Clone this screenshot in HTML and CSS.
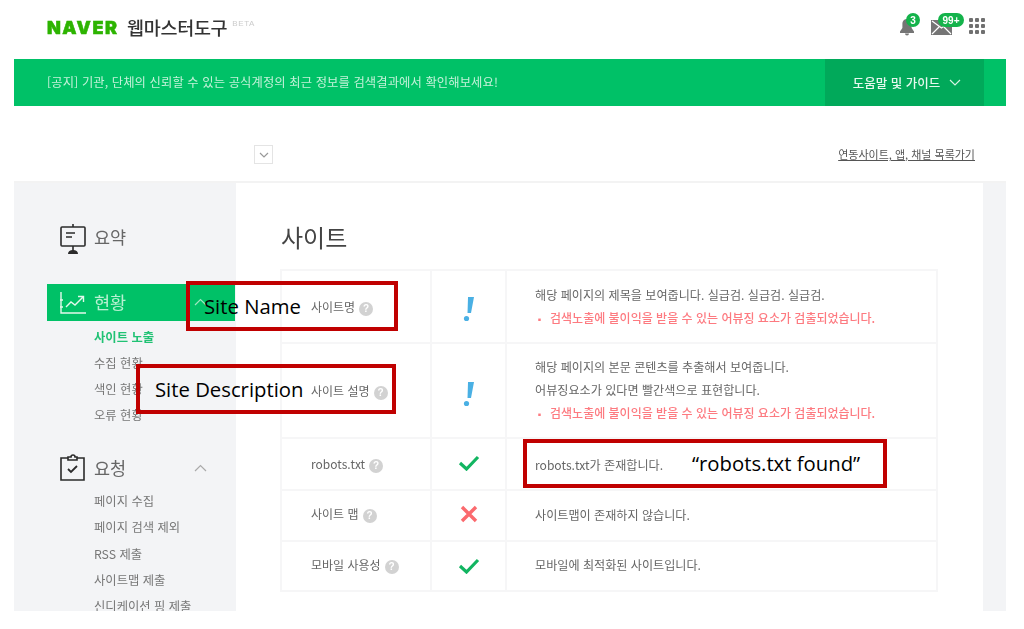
FILE: index.html
```html
<!DOCTYPE html>
<html lang="ko">
<head>
<meta charset="utf-8">
<title>네이버 웹마스터도구</title>
<link rel="stylesheet" href="styles.css">
</head>
<body>
<div class="page">
  <div class="shot">
    <header class="top">
      <div class="logo"><span class="naver">NAVER</span><span class="tool">웹마스터도구</span><span class="beta">BETA</span></div>
      <div class="tools">
        <span class="ico bell">
          <svg width="18" height="18" viewBox="0 0 18 18"><path d="M9 1c-3 0-4.600 2.300-4.600 5v4L2 13.600V15h14v-1.400L13.600 10V6c0-2.700-1.600-5-4.600-5zM7 15.500a2 2 0 0 0 4 0z" fill="#757575"/></svg>
          <b class="badge round">3</b>
        </span>
        <span class="ico mail">
          <svg width="21" height="15" viewBox="0 0 21 15"><rect width="21" height="15" fill="#757575"/><path d="M1 1l9.500 7L20 1M1 14l7-7M20 14l-7-7" fill="none" stroke="#fff" stroke-width="1.200"/></svg>
          <b class="badge pill">99+</b>
        </span>
        <span class="dots"><i></i><i></i><i></i><i></i><i></i><i></i><i></i><i></i><i></i></span>
      </div>
    </header>

    <section class="notice">
      <p class="notice-text">[공지] 기관, 단체의 신뢰할 수 있는 공식계정의 최근 정보를 검색결과에서 확인해보세요!</p>
      <div class="guide">도움말 및 가이드
        <svg width="12" height="7" viewBox="0 0 12 7"><path d="M1 1l5 5 5-5" fill="none" stroke="#d5f3e3" stroke-width="1.200"/></svg>
      </div>
    </section>

    <div class="bar">
      <span class="select"><svg width="10" height="6" viewBox="0 0 10 6"><path d="M1 1l4 4 4-4" fill="none" stroke="#999" stroke-width="1.200"/></svg></span>
      <a class="back">연동사이트, 앱, 채널 목록가기</a>
    </div>

    <main class="main">
      <nav class="side">
        <div class="menu first">
          <svg class="mi" width="28" height="32" viewBox="0 0 28 32"><g fill="none" stroke="#2b2b2b" stroke-width="1.600"><rect x="2" y="4" width="24" height="19" rx="1"/><path d="M14 1v3M14 23v5"/><path d="M7 10h9M7 14h6"/></g><path d="M9 31c0-2.500 2-4 5-4s5 1.500 5 4z" fill="#2b2b2b"/></svg>
          <span class="mt">요약</span>
        </div>
        <div class="menu on">
          <svg class="mi" width="28" height="24" viewBox="0 0 28 24"><g fill="none" stroke="#e3f8ec" stroke-width="1.400"><path d="M2 1v21h25"/><path d="M1 9h3M1 16h3"/><path d="M7 16l5-5 4 3 8-8M19 5.500h5.500V11"/></g></svg>
          <span class="mt">현황</span>
          <svg class="chev" width="13" height="8" viewBox="0 0 13 8"><path d="M1 7l5.500-5.500L12 7" fill="none" stroke="#9fe6c1" stroke-width="1.200"/></svg>
        </div>
        <ul class="sub">
          <li class="cur">사이트 노출</li>
          <li>수집 현황</li>
          <li>색인 현황</li>
          <li>오류 현황</li>
        </ul>
        <div class="menu second">
          <svg class="mi" width="28" height="28" viewBox="0 0 28 28"><g fill="none" stroke="#2b2b2b" stroke-width="1.600"><path d="M9 4H2v22h23V4h-7"/><path d="M9 6V3h3a2 2 0 0 1 4 0h2v3z"/></g><path d="M9 15l3 3 6-6" fill="none" stroke="#2b2b2b" stroke-width="1.800"/></svg>
          <span class="mt">요청</span>
          <svg class="chev" width="13" height="8" viewBox="0 0 13 8"><path d="M1 7l5.500-5.500L12 7" fill="none" stroke="#aaa" stroke-width="1.200"/></svg>
        </div>
        <ul class="sub sub-last">
          <li>페이지 수집</li>
          <li>페이지 검색 제외</li>
          <li>RSS 제출</li>
          <li>사이트맵 제출</li>
          <li>신디케이션 핑 제출</li>
        </ul>
      </nav>

      <article class="content">
        <h1 class="title">사이트</h1>
        <table class="report">
          <tr class="r1">
            <th>사이트명<i class="help">?</i></th>
            <td class="st"><svg width="12" height="26" viewBox="0 0 12 26"><path d="M5 1h6L8 17H4.500z" fill="#4ab0e4"/><circle cx="3.500" cy="22.500" r="2.600" fill="#4ab0e4"/></svg></td>
            <td class="ds"><p>해당 페이지의 제목을 보여줍니다. 실급검. 실급검. 실급검.</p><p class="warn">검색노출에 불이익을 받을 수 있는 어뷰징 요소가 검출되었습니다.</p></td>
          </tr>
          <tr class="r2">
            <th>사이트 설명<i class="help">?</i></th>
            <td class="st"><svg width="12" height="26" viewBox="0 0 12 26"><path d="M5 1h6L8 17H4.500z" fill="#4ab0e4"/><circle cx="3.500" cy="22.500" r="2.600" fill="#4ab0e4"/></svg></td>
            <td class="ds"><p>해당 페이지의 본문 콘텐츠를 추출해서 보여줍니다.</p><p>어뷰징요소가 있다면 빨간색으로 표현합니다.</p><p class="warn">검색노출에 불이익을 받을 수 있는 어뷰징 요소가 검출되었습니다.</p></td>
          </tr>
          <tr class="r3">
            <th>robots.txt<i class="help">?</i></th>
            <td class="st"><svg width="22" height="16" viewBox="0 0 22 16"><path d="M2 8l6.500 6L20 2" fill="none" stroke="#12b561" stroke-width="3.200"/></svg></td>
            <td class="ds"><p>robots.txt가 존재합니다.</p></td>
          </tr>
          <tr class="r4">
            <th>사이트 맵<i class="help">?</i></th>
            <td class="st"><svg width="18" height="18" viewBox="0 0 18 18"><path d="M2 2l14 14M16 2L2 16" fill="none" stroke="#fb6a6e" stroke-width="3.400"/></svg></td>
            <td class="ds"><p>사이트맵이 존재하지 않습니다.</p></td>
          </tr>
          <tr class="r5">
            <th>모바일 사용성<i class="help">?</i></th>
            <td class="st"><svg width="22" height="16" viewBox="0 0 22 16"><path d="M2 8l6.500 6L20 2" fill="none" stroke="#12b561" stroke-width="3.200"/></svg></td>
            <td class="ds"><p>모바일에 최적화된 사이트입니다.</p></td>
          </tr>
        </table>
      </article>
      <div class="strip"></div>
    </main>
  </div>

  <div class="note note-name">Site Name</div>
  <div class="note note-desc">Site Description</div>
  <div class="note note-robots">“robots.txt found”</div>
</div>
</body>
</html>
```

FILE: styles.css
```css
* { box-sizing: border-box; }
html, body { margin: 0; padding: 0; background: #fff; }
body { font-family: "Noto Sans CJK KR", "Noto Sans", sans-serif; color: #666; }
.page { position: relative; width: 1024px; height: 629px; overflow: hidden; }
.shot { width: 1024px; height: 629px; filter: blur(0.7px); }
p, ul, h1 { margin: 0; padding: 0; }
ul { list-style: none; }

.top { height: 59px; display: flex; justify-content: space-between; padding: 13px 39px 0 47px; }
.logo { display: flex; align-items: center; height: 28px; }
.naver { font-family: Inter, sans-serif; font-weight: 900; font-size: 18px; color: #2db400; letter-spacing: 1.5px; width: 80px; white-space: nowrap; -webkit-text-stroke: 0.5px #2db400; }
.tool { font-size: 18.500px; line-height: 28px; font-weight: 500; color: #333; letter-spacing: -0.3px; }
.beta { font-family: "Liberation Sans", sans-serif; font-size: 8px; color: #ccc; letter-spacing: 0.6px; margin: -8px 0 0 5px; }
.tools { display: flex; align-items: flex-start; }
.ico { position: relative; display: block; }
.ico svg { display: block; }
.bell { width: 18px; height: 18px; margin: 5px 15px 0 0; }
.mail { width: 21px; height: 15px; margin: 7px 17px 0 0; }
.badge { position: absolute; display: flex; align-items: center; justify-content: center; background: #14b34b; color: #fff; font-family: "Liberation Sans", sans-serif; font-size: 10px; font-weight: 700; }
.round { width: 14px; height: 14px; border-radius: 50%; top: -5px; left: 8px; }
.pill { width: 26px; height: 14px; border-radius: 7px; top: -7px; left: 7px; }
.dots { display: grid; grid-template-columns: repeat(3, 4px); gap: 2px; margin-top: 5px; }
.dots i { width: 4px; height: 4px; background: #707070; border-radius: 1px; }

.notice { height: 47px; margin: 0 18px 0 14px; background: #00c167; display: flex; justify-content: space-between; padding: 0 22px 0 33px; align-items: stretch; }
.notice-text { font-size: 12.300px; line-height: 47px; color: #c4f1d9; letter-spacing: 0.1px; }
.guide { width: 159px; background: #01a95a; color: #e6f8ee; font-size: 12.500px; font-weight: 500; display: flex; align-items: center; justify-content: center; gap: 9px; padding: 0 0 1px 5px; }

.bar { height: 75px; margin: 0 49px 0 254px; display: flex; justify-content: space-between; align-items: flex-start; padding-top: 39px; }
.select { width: 19px; height: 19px; border: 1px solid #e4e4e4; display: flex; align-items: center; justify-content: center; }
.back { font-size: 11px; line-height: 16px; margin-top: 1px; color: #555; text-decoration: underline; }

.main { height: 430px; margin: 0 18px 0 14px; display: flex; overflow: hidden; border-top: 2px solid #f3f3f3; }
.side { width: 222px; flex: none; background: #f3f4f6; padding: 37px 1px 0 33px; }
.menu { display: flex; align-items: center; position: relative; height: 37px; font-size: 17.500px; }
.mi { flex: none; margin-left: 12px; }
.mt { position: absolute; left: 47px; top: 4px; line-height: 26px; color: #666; }
.chev { position: absolute; left: 147px; top: 14px; }
.on { background: #00c167; margin-top: 27px; }
.on .mt { color: #b8f0d2; top: 5px; }
.second { margin-top: 26px; height: 28px; }
.second .mt { top: 1px; }
.second .chev { top: 10px; }
.sub { padding: 3px 0 0 47px; font-size: 12.300px; line-height: 26px; color: #777; white-space: nowrap; }
.sub-last { padding-top: 6px; line-height: 26.300px; }
.cur { color: #20c274; font-weight: 700; }

.content { flex: 1; padding: 0 44px 0 44px; min-width: 0; }
.title { font-size: 24px; line-height: 36px; font-weight: 400; color: #444; margin: 36px 0 14px 1px; }
.report { width: 658px; border-collapse: collapse; table-layout: fixed; }
.report th, .report td { border: 2px solid #f6f6f7; padding: 0; }
.report th { width: 150px; text-align: left; padding-left: 29px; font-size: 12px; font-weight: 400; color: #666; white-space: nowrap; }
.report .st { width: 75px; line-height: 0; }
.st svg { display: block; margin: 0 auto; }
.ds { padding-left: 28px !important; font-size: 12.100px; line-height: 23px; color: #666; }
.warn { color: #fd7a80; font-weight: 500; font-size: 12px; }
.warn::before { content: "▪"; margin-right: 6px; font-size: 9px; }
.help { display: inline-block; width: 14px; height: 14px; margin-left: 4px; border-radius: 50%; background: #d2d2d2; color: #fff; font-family: "Liberation Sans", sans-serif; font-size: 10px; font-weight: 700; font-style: normal; line-height: 14px; text-align: center; vertical-align: 0; }
.r1 { height: 73px; } .r2 { height: 95px; } .r3 { height: 52px; } .r4 { height: 51px; } .r5 { height: 50px; }
.report .r1 .st { padding-top: 5px; }
.report .r2 .st { padding-top: 7px; }
.report .r3 .st { padding-bottom: 3px; }
.report .r4 .st { padding-bottom: 4px; }
.report .r5 .st { padding-bottom: 1px; }
.report .r1 th { padding-top: 1px; }
.report .r4 th, .report .r4 .ds { padding-bottom: 3px; }
.report .r5 th, .report .r5 .ds { padding-bottom: 3px; }

.strip { width: 23px; flex: none; background: #f3f4f6; }

.note { position: absolute; border: 4px solid #c00000; color: #000; font-family: "Open Sans", sans-serif; font-size: 20.300px; line-height: 1; display: flex; align-items: center; white-space: nowrap; }
.note-name { left: 186px; top: 281px; width: 212px; height: 50px; padding-left: 14px; }
.note-desc { left: 136px; top: 364px; width: 260px; height: 50px; padding-left: 15px; }
.note-robots { left: 523px; top: 439px; width: 364px; height: 49px; padding-left: 165px; }
```
